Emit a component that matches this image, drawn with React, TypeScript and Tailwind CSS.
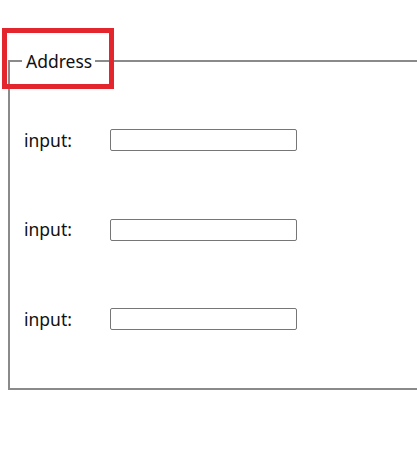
export default function App() {
  const rows = ["input:", "input:", "input:"];
  return (
    <div className="relative w-screen h-[470px] overflow-hidden bg-white font-['Noto_Sans',sans-serif] text-[17.5px] text-[#111]">
      <fieldset className="ml-2 mt-[50px] w-[440px] border-2 border-[#8a8a8a] px-3 pt-[57px] pb-[58px]">
        <legend className="pl-[4px] pr-[3px] leading-[22px]">Address</legend>
        <div className="flex flex-col gap-[67.5px]">
          {rows.map((label, i) => (
            <div key={i} className="flex items-center h-[22px]">
              <label className="w-[88px] pl-[2px]">{label}</label>
              <input
                type="text"
                className="w-[187px] h-[22px] border border-[#767676] rounded-[2px] bg-white"
              />
            </div>
          ))}
        </div>
      </fieldset>
      <div className="absolute left-[2px] top-[28px] w-[112px] h-[61px] border-[5px] border-[#e3262e]" />
    </div>
  );
}
